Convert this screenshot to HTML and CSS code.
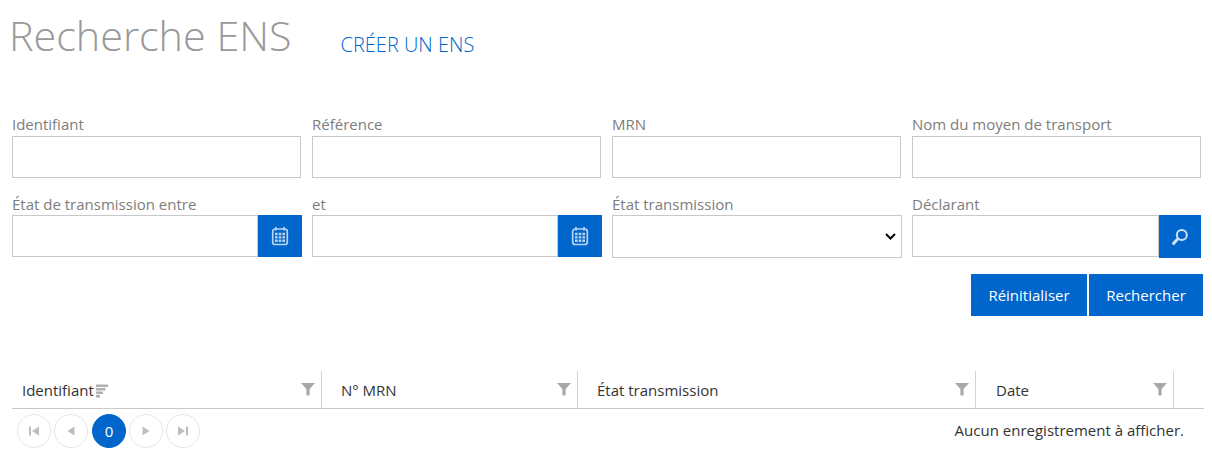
FILE: index.html
```html
<!DOCTYPE html>
<html lang="fr">
<head>
<meta charset="utf-8">
<title>Recherche ENS</title>
<link rel="stylesheet" href="styles.css">
</head>
<body>

<div class="titleBar">
  <h1>Recherche ENS</h1>
  <a class="createLink" href="#">CRÉER UN ENS</a>
</div>

<form class="searchForm">
  <div class="field">
    <label>Identifiant</label>
    <input type="text">
  </div>
  <div class="field">
    <label>Référence</label>
    <input type="text">
  </div>
  <div class="field">
    <label>MRN</label>
    <input type="text">
  </div>
  <div class="field">
    <label>Nom du moyen de transport</label>
    <input type="text">
  </div>

  <div class="field">
    <label>État de transmission entre</label>
    <div class="inputGroup">
      <input type="text">
      <button type="button" class="addon">
        <svg width="18" height="20" viewBox="0 0 18 20"><rect x="1.700" y="3" width="14.600" height="15.500" rx="2.500" fill="none" stroke="#b9d4f0" stroke-width="1.700"/><path d="M5 1v3.500M13 1v3.500" stroke="#b9d4f0" stroke-width="1.700"/><path d="M4 6.800h2.600v2.400H4zM7.700 6.800h2.600v2.400H7.700zM11.400 6.800H14v2.400h-2.600zM4 10.200h2.600v2.400H4zM7.700 10.200h2.600v2.400H7.700zM11.400 10.200H14v2.400h-2.600zM4 13.600h2.600V16H4zM7.700 13.600h2.600V16H7.700zM11.400 13.600H14V16h-2.600z" fill="#b9d4f0"/></svg>
      </button>
    </div>
  </div>
  <div class="field">
    <label>et</label>
    <div class="inputGroup">
      <input type="text">
      <button type="button" class="addon">
        <svg width="18" height="20" viewBox="0 0 18 20"><rect x="1.700" y="3" width="14.600" height="15.500" rx="2.500" fill="none" stroke="#b9d4f0" stroke-width="1.700"/><path d="M5 1v3.500M13 1v3.500" stroke="#b9d4f0" stroke-width="1.700"/><path d="M4 6.800h2.600v2.400H4zM7.700 6.800h2.600v2.400H7.700zM11.400 6.800H14v2.400h-2.600zM4 10.200h2.600v2.400H4zM7.700 10.200h2.600v2.400H7.700zM11.400 10.200H14v2.400h-2.600zM4 13.600h2.600V16H4zM7.700 13.600h2.600V16H7.700zM11.400 13.600H14V16h-2.600z" fill="#b9d4f0"/></svg>
      </button>
    </div>
  </div>
  <div class="field">
    <label>État transmission</label>
    <select></select>
  </div>
  <div class="field">
    <label>Déclarant</label>
    <div class="inputGroup searchGroup">
      <input type="text">
      <button type="button" class="addon searchAddon">
        <svg width="18" height="18" viewBox="0 0 18 18"><circle cx="10.800" cy="7" r="5" fill="none" stroke="#cfe1f5" stroke-width="2"/><path d="M7 10.800L2.600 15.400" stroke="#cfe1f5" stroke-width="3" stroke-linecap="round"/></svg>
      </button>
    </div>
  </div>
</form>

<div class="formButtons">
  <button type="button" class="btn btnReset">Réinitialiser</button>
  <button type="button" class="btn btnSearch">Rechercher</button>
</div>

<div class="grid">
  <div class="gridHeader">
    <div class="th colId">
      <span>Identifiant</span>
      <svg class="sortIcon" width="13" height="14" viewBox="0 0 13 14"><path d="M0 0.500h12v2.400H0zM0 4h9.500v2.400H0zM0 7.500h7v2.400H0zM0 11h4v2.400H0z" fill="#b0b0b0"/></svg>
      <svg class="filterIcon" width="14" height="14" viewBox="0 0 14 14"><path d="M0 1h14L8.600 7v6.500H5.400V7z" fill="#a8a8a8"/></svg>
    </div>
    <div class="th colMrn">
      <span>N° MRN</span>
      <svg class="filterIcon" width="14" height="14" viewBox="0 0 14 14"><path d="M0 1h14L8.600 7v6.500H5.400V7z" fill="#a8a8a8"/></svg>
    </div>
    <div class="th colState">
      <span>État transmission</span>
      <svg class="filterIcon" width="14" height="14" viewBox="0 0 14 14"><path d="M0 1h14L8.600 7v6.500H5.400V7z" fill="#a8a8a8"/></svg>
    </div>
    <div class="th colDate">
      <span>Date</span>
      <svg class="filterIcon" width="14" height="14" viewBox="0 0 14 14"><path d="M0 1h14L8.600 7v6.500H5.400V7z" fill="#a8a8a8"/></svg>
    </div>
  </div>
  <div class="pager">
    <div class="pageLinks">
      <a class="pageBtn"><svg width="12" height="12" viewBox="0 0 12 12"><path d="M1 1.500h2v9H1zM11 1.500v9L4 6z" fill="#bdbdbd"/></svg></a>
      <a class="pageBtn"><svg width="12" height="12" viewBox="0 0 12 12"><path d="M9.500 1.500v9L2.500 6z" fill="#bdbdbd"/></svg></a>
      <a class="pageBtn current">0</a>
      <a class="pageBtn"><svg width="12" height="12" viewBox="0 0 12 12"><path d="M2.500 1.500v9l7-4.500z" fill="#bdbdbd"/></svg></a>
      <a class="pageBtn"><svg width="12" height="12" viewBox="0 0 12 12"><path d="M1 1.500v9L8 6zM9 1.500h2v9H9z" fill="#bdbdbd"/></svg></a>
    </div>
    <span class="pageInfo">Aucun enregistrement à afficher.</span>
  </div>
</div>

</body>
</html>
```

FILE: styles.css
```css
* {
  box-sizing: border-box;
}

body {
  margin: 0;
  padding: 0 8px 0 12px;
  background-color: #fff;
  font-family: "Open Sans", "Noto Sans", sans-serif;
  font-size: 15px;
  color: #333;
  overflow: hidden;
}

/* title */
.titleBar {
  display: flex;
  align-items: baseline;
  height: 101px;
  padding-top: 5px;
}

h1 {
  margin: 0 0 0 -3px;
  font-size: 41.3px;
  line-height: 60px;
  font-weight: 300;
  color: #999;
}

.createLink {
  margin-left: 49px;
  margin-bottom: -1px;
  font-size: 20px;
  font-weight: 300;
  color: #0066cc;
  text-decoration: none;
  transform: translateY(1px);
}

/* search form */
.searchForm {
  display: grid;
  grid-template-columns: repeat(4, 289px);
  column-gap: 11px;
  row-gap: 16px;
  padding-top: 14px;
}

.field label {
  display: block;
  height: 21px;
  font-size: 15px;
  line-height: 20px;
  color: #7d7d7d;
  white-space: nowrap;
}

.field:nth-child(-n+4) label {
  line-height: 18px;
}

.field input {
  display: block;
  width: 100%;
  height: 42px;
  border: 1px solid #c8c8c8;
  background-color: #fff;
  outline: none;
  min-width: 0;
}

.field select {
  display: block;
  width: 290px;
  height: 43px;
  border: 1px solid #c8c8c8;
  border-radius: 0;
  appearance: none;
  background: #fff url("data:image/svg+xml,%3Csvg xmlns='http://www.w3.org/2000/svg' width='11' height='7'%3E%3Cpath d='M1 1l4.500 4.500L10 1' fill='none' stroke='%23000' stroke-width='2'/%3E%3C/svg%3E") no-repeat right 5px center;
  color: #000;
}

.inputGroup {
  display: flex;
  width: 290px;
}

.inputGroup input {
  flex: 1;
}

.searchGroup {
  width: 289px;
}

.addon {
  display: flex;
  align-items: center;
  justify-content: center;
  width: 44px;
  height: 42px;
  padding: 0;
  border: none;
  background-color: #0066cc;
}

.searchAddon {
  width: 42px;
  height: 43px;
}

/* buttons */
.formButtons {
  display: flex;
  justify-content: flex-end;
  gap: 2px;
  width: 1191px;
  margin-top: 16px;
}

.btn {
  height: 42px;
  padding: 0;
  border: none;
  background-color: #0066cc;
  color: #fff;
  font-family: inherit;
  font-size: 15px;
}

.btnReset {
  width: 116px;
}

.btnSearch {
  width: 114px;
}

/* grid */
.grid {
  width: 1192px;
  margin-top: 55px;
}

.gridHeader {
  display: flex;
  height: 38px;
  border-bottom: 1px solid #c8c8c8;
}

.th {
  display: flex;
  align-items: center;
  height: 37px;
  border-right: 1px solid #d4d4d4;
  color: #333;
}

.filterIcon {
  margin-left: auto;
  margin-right: 6px;
  margin-top: -2px;
}

.sortIcon {
  margin-left: 2px;
  margin-top: 3px;
}

.colId {
  width: 310px;
  padding-left: 10px;
}

.colMrn {
  width: 256px;
  padding-left: 19px;
}

.colState {
  width: 398px;
  padding-left: 19px;
}

.colDate {
  width: 198px;
  padding-left: 20px;
}

.pager {
  display: flex;
  align-items: center;
  justify-content: space-between;
  padding: 5px 20px 0 5px;
}

.pageLinks {
  display: flex;
  gap: 3px;
}

.pageBtn {
  display: flex;
  align-items: center;
  justify-content: center;
  width: 34px;
  height: 34px;
  border: 1px solid #e6e6e6;
  border-radius: 50%;
}

.pageBtn.current {
  margin-left: 1px;
  border-color: #0066cc;
  background-color: #0066cc;
  color: #fff;
}

.pageInfo {
  margin-top: -2px;
}
```
